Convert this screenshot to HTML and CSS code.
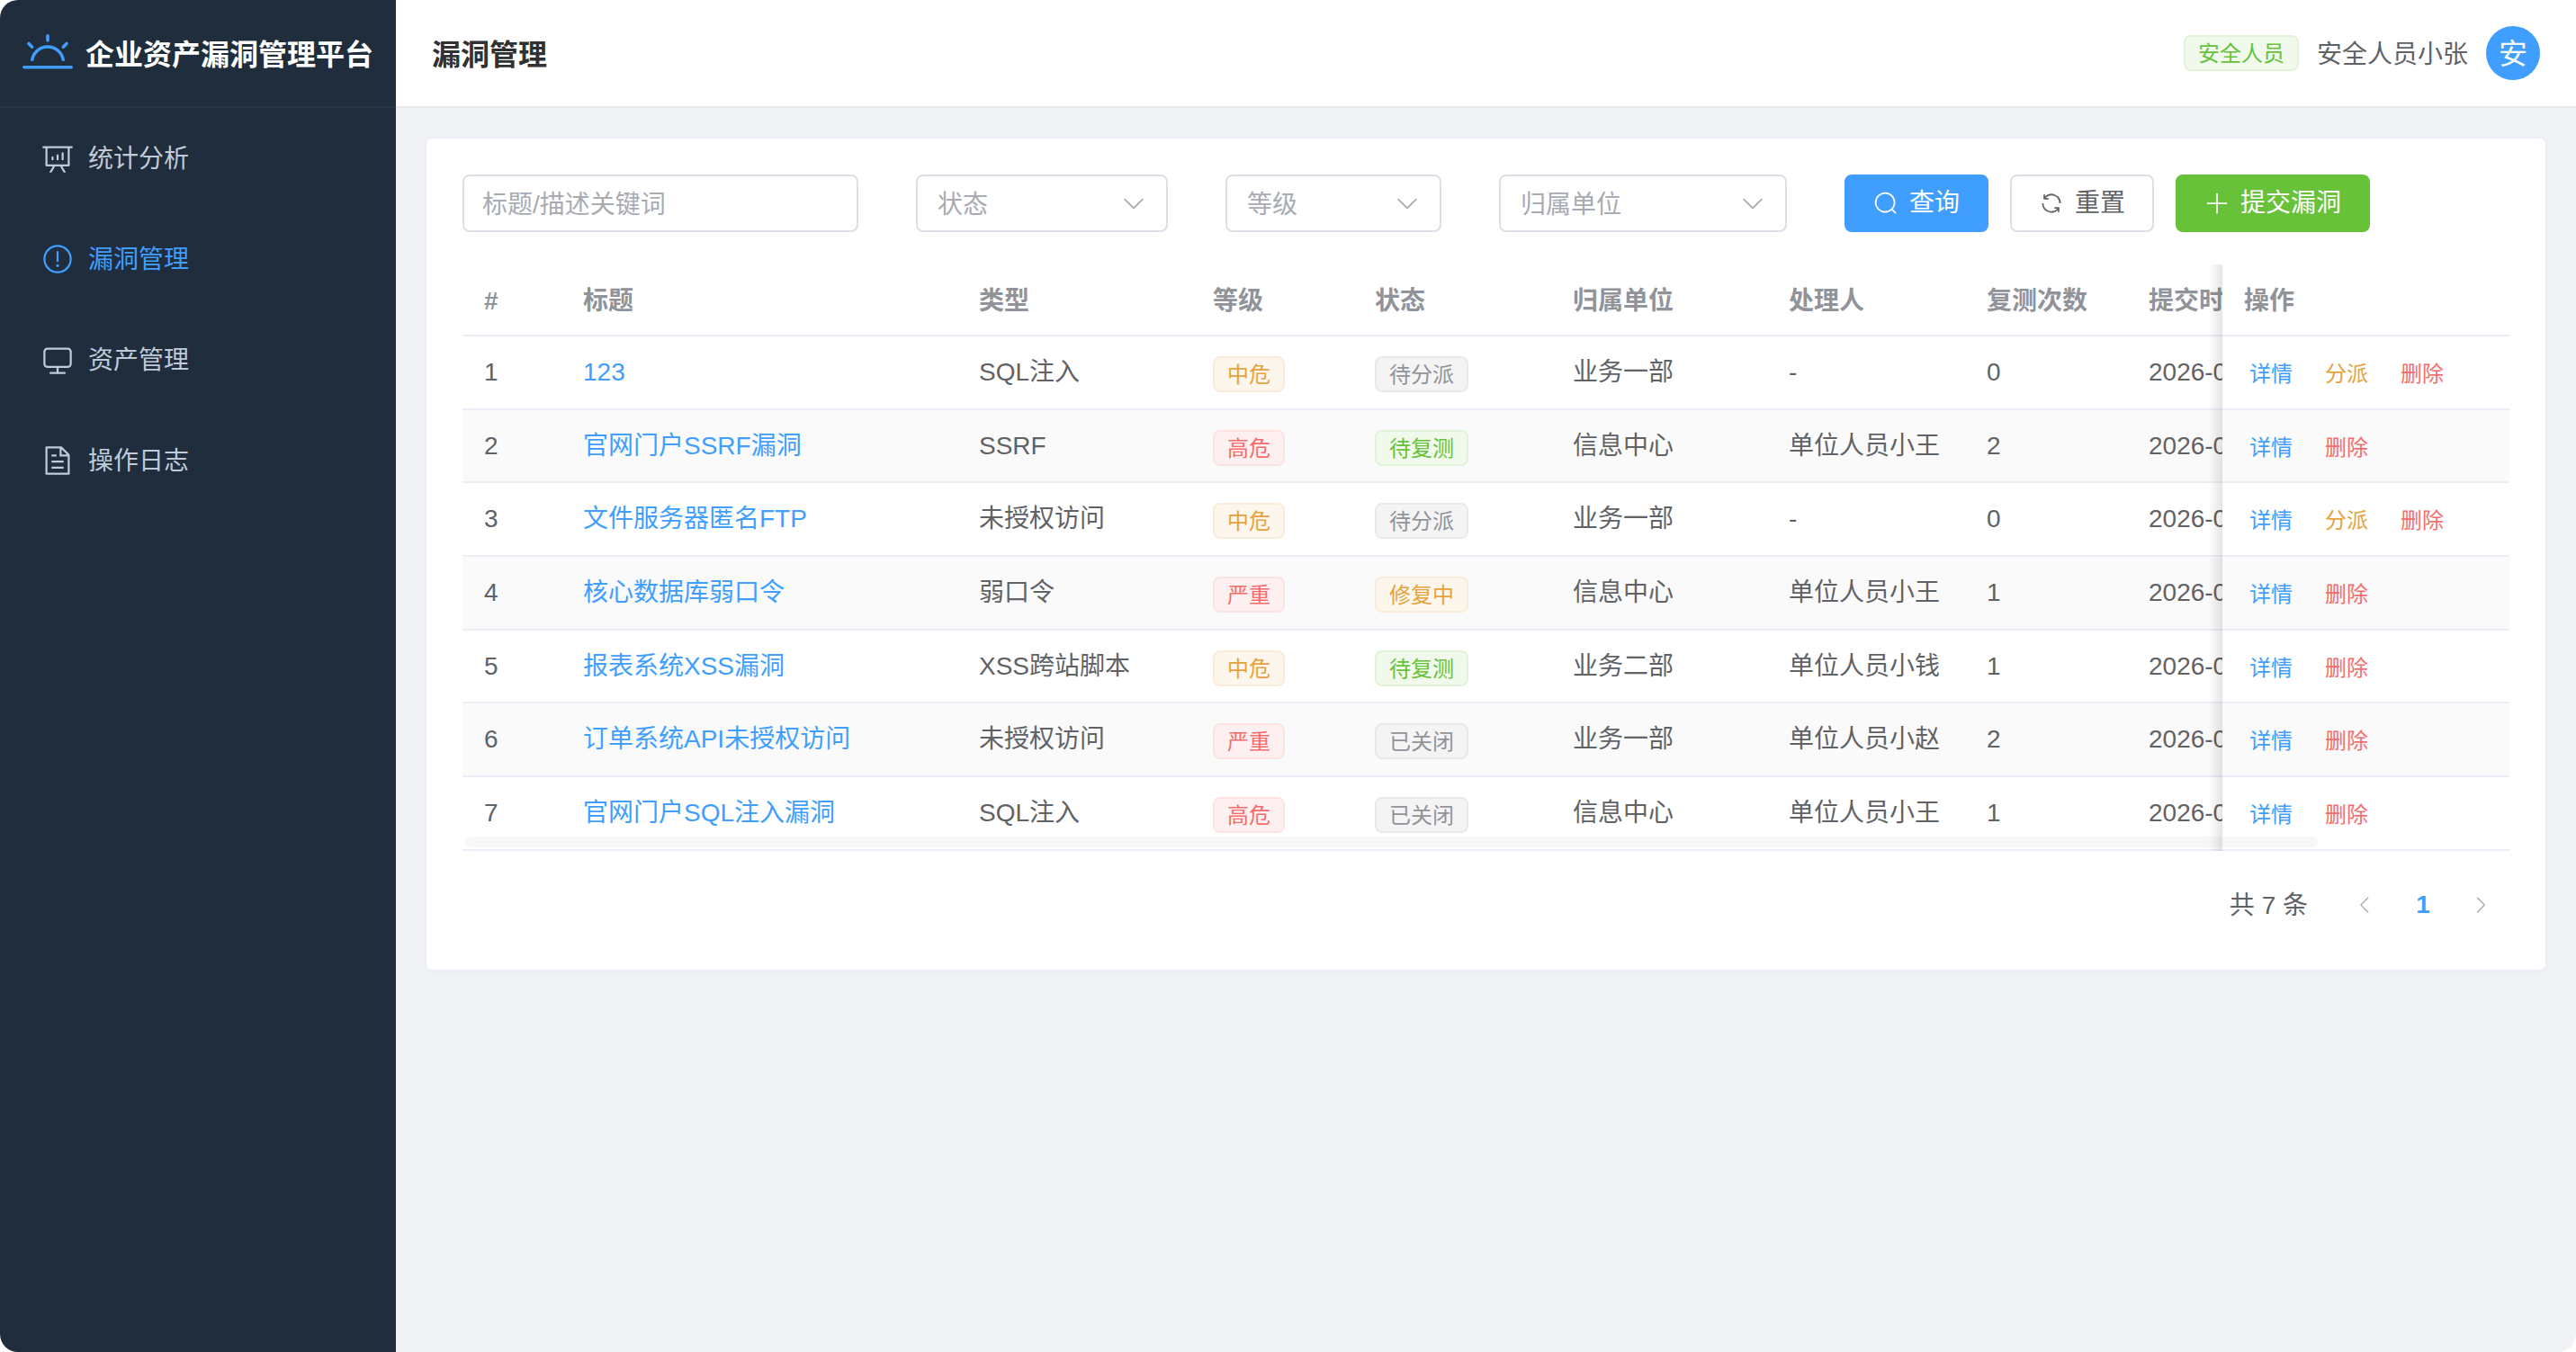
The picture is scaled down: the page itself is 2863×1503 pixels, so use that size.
FILE: index.html
```html
<!DOCTYPE html>
<html lang="zh-CN">
<head>
<meta charset="utf-8">
<title>企业资产漏洞管理平台</title>
<link rel="stylesheet" href="styles.css">
</head>
<body>
<div class="app">
  <aside class="sidebar">
    <div class="brand">
      <svg class="brand-icon" viewBox="0 0 1024 1024"><path d="M32 768h960a32 32 0 1 1 0 64H32a32 32 0 1 1 0-64zm129.408-96a352 352 0 0 1 701.184 0h-64.32a288 288 0 0 0-572.544 0h-64.32zM512 128a32 32 0 0 1 32 32v96a32 32 0 0 1-64 0v-96a32 32 0 0 1 32-32zm407.296 168.704a32 32 0 0 1 0 45.248l-67.84 67.84a32 32 0 1 1-45.248-45.248l67.84-67.84a32 32 0 0 1 45.248 0zm-814.592 0a32 32 0 0 1 45.248 0l67.84 67.84a32 32 0 1 1-45.248 45.248l-67.84-67.84a32 32 0 0 1 0-45.248z"/></svg>
      <span class="brand-name">企业资产漏洞管理平台</span>
    </div>
    <nav class="menu">
      <a class="menu-item"><svg class="menu-icon" viewBox="0 0 1024 1024"><path d="m665.216 768 110.848 192h-73.856L591.36 768H433.024L322.176 960H248.32l110.848-192H160a32 32 0 0 1-32-32V192H64a32 32 0 0 1 0-64h896a32 32 0 1 1 0 64h-64v544a32 32 0 0 1-32 32H665.216zM832 192H192v512h640V192zM352 448a32 32 0 0 1 32 32v64a32 32 0 0 1-64 0v-64a32 32 0 0 1 32-32zm160-64a32 32 0 0 1 32 32v128a32 32 0 0 1-64 0V416a32 32 0 0 1 32-32zm160-64a32 32 0 0 1 32 32v192a32 32 0 1 1-64 0V352a32 32 0 0 1 32-32z"/></svg><span class="menu-label">统计分析</span></a>
      <a class="menu-item is-active"><svg class="menu-icon" viewBox="0 0 1024 1024"><path d="M512 64a448 448 0 1 1 0 896 448 448 0 0 1 0-896zm0 832a384 384 0 0 0 0-768 384 384 0 0 0 0 768zm48-176a48 48 0 1 1-96 0 48 48 0 0 1 96 0zm-48-464a32 32 0 0 1 32 32v288a32 32 0 0 1-64 0V288a32 32 0 0 1 32-32z"/></svg><span class="menu-label">漏洞管理</span></a>
      <a class="menu-item"><svg class="menu-icon" viewBox="0 0 1024 1024"><path d="M544 768v128h192a32 32 0 1 1 0 64H288a32 32 0 1 1 0-64h192V768H192A128 128 0 0 1 64 640V256a128 128 0 0 1 128-128h640a128 128 0 0 1 128 128v384a128 128 0 0 1-128 128H544zM192 192a64 64 0 0 0-64 64v384a64 64 0 0 0 64 64h640a64 64 0 0 0 64-64V256a64 64 0 0 0-64-64H192z"/></svg><span class="menu-label">资产管理</span></a>
      <a class="menu-item"><svg class="menu-icon" viewBox="0 0 1024 1024"><path d="M832 384H576V128H192v768h640V384zm-26.496-64L640 154.496V320h165.504zM160 64h480l256 256v608a32 32 0 0 1-32 32H160a32 32 0 0 1-32-32V96a32 32 0 0 1 32-32zm160 448h384v64H320v-64zm0-192h160v64H320v-64zm0 384h384v64H320v-64z"/></svg><span class="menu-label">操作日志</span></a>
    </nav>
  </aside>
  <div class="main">
    <header class="topbar">
      <h1 class="page-title">漏洞管理</h1>
      <div class="user">
        <span class="tag tag-success">安全人员</span>
        <span class="user-name">安全人员小张</span>
        <span class="avatar">安</span>
      </div>
    </header>
    <main class="content">
      <section class="card">
        <div class="filters">
          <div class="field field-keyword"><span class="placeholder">标题/描述关键词</span></div>
          <div class="field field-select field-status"><span class="placeholder">状态</span><svg class="caret" viewBox="0 0 1024 1024"><path d="M831.872 340.864 512 652.672 192.128 340.864a30.592 30.592 0 0 0-42.752 0 29.12 29.12 0 0 0 0 41.6L489.664 714.24a32 32 0 0 0 44.672 0l340.288-331.776a29.12 29.12 0 0 0 0-41.728 30.592 30.592 0 0 0-42.752 0z"/></svg></div>
          <div class="field field-select field-level"><span class="placeholder">等级</span><svg class="caret" viewBox="0 0 1024 1024"><path d="M831.872 340.864 512 652.672 192.128 340.864a30.592 30.592 0 0 0-42.752 0 29.12 29.12 0 0 0 0 41.6L489.664 714.24a32 32 0 0 0 44.672 0l340.288-331.776a29.12 29.12 0 0 0 0-41.728 30.592 30.592 0 0 0-42.752 0z"/></svg></div>
          <div class="field field-select field-owner"><span class="placeholder">归属单位</span><svg class="caret" viewBox="0 0 1024 1024"><path d="M831.872 340.864 512 652.672 192.128 340.864a30.592 30.592 0 0 0-42.752 0 29.12 29.12 0 0 0 0 41.6L489.664 714.24a32 32 0 0 0 44.672 0l340.288-331.776a29.12 29.12 0 0 0 0-41.728 30.592 30.592 0 0 0-42.752 0z"/></svg></div>
          <div class="actions">
            <button class="btn btn-primary"><svg class="btn-icon" viewBox="0 0 1024 1024"><path d="m795.904 750.72 124.992 124.928a32 32 0 0 1-45.248 45.248L750.656 795.904a416 416 0 1 1 45.248-45.248zM480 832a352 352 0 1 0 0-704 352 352 0 0 0 0 704z"/></svg>查询</button>
            <button class="btn btn-default"><svg class="btn-icon" viewBox="0 0 1024 1024"><path d="M771.776 794.88A384 384 0 0 1 128 512h64a320 320 0 0 0 555.712 216.448H654.72a32 32 0 1 1 0-64h149.056a32 32 0 0 1 32 32v148.928a32 32 0 1 1-64 0v-50.56zM276.288 295.616h92.992a32 32 0 0 1 0 64H220.16a32 32 0 0 1-32-32V178.56a32 32 0 0 1 64 0v50.56A384 384 0 0 1 896.128 512h-64a320 320 0 0 0-555.776-216.384z"/></svg>重置</button>
            <button class="btn btn-success"><svg class="btn-icon" viewBox="0 0 1024 1024"><path d="M480 480V128a32 32 0 0 1 64 0v352h352a32 32 0 0 1 0 64H544v352a32 32 0 1 1-64 0V544H128a32 32 0 0 1 0-64h352z"/></svg>提交漏洞</button>
          </div>
        </div>
        <div class="table-wrap">
          <table class="table">
            <colgroup>
              <col class="c-id"><col class="c-title"><col class="c-type"><col class="c-level"><col class="c-status"><col class="c-owner"><col class="c-handler"><col class="c-retest"><col class="c-time"><col class="c-ops">
            </colgroup>
            <thead>
              <tr><th>#</th><th>标题</th><th>类型</th><th>等级</th><th>状态</th><th>归属单位</th><th>处理人</th><th>复测次数</th><th class="cut">提交时间</th><th>操作</th></tr>
            </thead>
            <tbody>
              <tr><td>1</td><td><a class="link">123</a></td><td>SQL注入</td><td><span class="tag tag-warning">中危</span></td><td><span class="tag tag-info">待分派</span></td><td>业务一部</td><td>-</td><td>0</td><td class="cut">2026-0</td><td class="ops"><a class="op op-blue">详情</a><a class="op op-orange">分派</a><a class="op op-red">删除</a></td></tr>
              <tr><td>2</td><td><a class="link">官网门户SSRF漏洞</a></td><td>SSRF</td><td><span class="tag tag-danger">高危</span></td><td><span class="tag tag-success">待复测</span></td><td>信息中心</td><td>单位人员小王</td><td>2</td><td class="cut">2026-0</td><td class="ops"><a class="op op-blue">详情</a><a class="op op-red">删除</a></td></tr>
              <tr><td>3</td><td><a class="link">文件服务器匿名FTP</a></td><td>未授权访问</td><td><span class="tag tag-warning">中危</span></td><td><span class="tag tag-info">待分派</span></td><td>业务一部</td><td>-</td><td>0</td><td class="cut">2026-0</td><td class="ops"><a class="op op-blue">详情</a><a class="op op-orange">分派</a><a class="op op-red">删除</a></td></tr>
              <tr><td>4</td><td><a class="link">核心数据库弱口令</a></td><td>弱口令</td><td><span class="tag tag-danger">严重</span></td><td><span class="tag tag-warning">修复中</span></td><td>信息中心</td><td>单位人员小王</td><td>1</td><td class="cut">2026-0</td><td class="ops"><a class="op op-blue">详情</a><a class="op op-red">删除</a></td></tr>
              <tr><td>5</td><td><a class="link">报表系统XSS漏洞</a></td><td>XSS跨站脚本</td><td><span class="tag tag-warning">中危</span></td><td><span class="tag tag-success">待复测</span></td><td>业务二部</td><td>单位人员小钱</td><td>1</td><td class="cut">2026-0</td><td class="ops"><a class="op op-blue">详情</a><a class="op op-red">删除</a></td></tr>
              <tr><td>6</td><td><a class="link">订单系统API未授权访问</a></td><td>未授权访问</td><td><span class="tag tag-danger">严重</span></td><td><span class="tag tag-info">已关闭</span></td><td>业务一部</td><td>单位人员小赵</td><td>2</td><td class="cut">2026-0</td><td class="ops"><a class="op op-blue">详情</a><a class="op op-red">删除</a></td></tr>
              <tr><td>7</td><td><a class="link">官网门户SQL注入漏洞</a></td><td>SQL注入</td><td><span class="tag tag-danger">高危</span></td><td><span class="tag tag-info">已关闭</span></td><td>信息中心</td><td>单位人员小王</td><td>1</td><td class="cut">2026-0</td><td class="ops"><a class="op op-blue">详情</a><a class="op op-red">删除</a></td></tr>
            </tbody>
          </table>
          <div class="fixed-shadow"></div>
          <div class="scrollbar"></div>
        </div>
        <div class="pagination">
          <span class="total">共 7 条</span>
          <span class="page-btn"><svg class="page-arrow" viewBox="0 0 1024 1024"><path d="M609.408 149.376 277.76 489.6a32 32 0 0 0 0 44.672l331.648 340.352a29.12 29.12 0 0 0 41.728 0 30.592 30.592 0 0 0 0-42.752L339.264 511.936l311.872-319.872a30.592 30.592 0 0 0 0-42.688 29.12 29.12 0 0 0-41.728 0z"/></svg></span>
          <span class="page-btn page-current">1</span>
          <span class="page-btn"><svg class="page-arrow" viewBox="0 0 1024 1024"><path d="M340.864 149.312a30.592 30.592 0 0 0 0 42.752L652.736 512 340.864 831.872a30.592 30.592 0 0 0 0 42.752 29.12 29.12 0 0 0 41.728 0L714.24 534.336a32 32 0 0 0 0-44.672L382.592 149.376a29.12 29.12 0 0 0-41.728 0z"/></svg></span>
        </div>
      </section>
    </main>
  </div>
</div>
</body>
</html>
```
FILE: styles.css
```css
* { box-sizing: border-box; }
html, body { height: 100%; margin: 0; }
body {
  background: #fff;
  color: #606266;
  font-family: "Liberation Sans", "Noto Sans CJK SC", sans-serif;
  font-size: 28px;
  line-height: 40px;
  overflow: hidden;
}
svg { fill: currentColor; display: block; flex: none; }

.app {
  display: flex;
  height: 100vh;
  border-radius: 20px;
  overflow: hidden;
}

/* sidebar */
.sidebar {
  width: 440px;
  flex: none;
  background: #1f2d3d;
}
.brand {
  display: flex;
  align-items: center;
  gap: 14px;
  height: 120px;
  padding-left: 25px;
  border-bottom: 2px solid rgba(255, 255, 255, .05);
}
.brand-icon { width: 56px; height: 56px; color: #409eff; }
.brand-name { padding-top: 4px; color: #fff; font-size: 32px; font-weight: 700; }
.menu { display: flex; flex-direction: column; }
.menu-item {
  display: flex;
  align-items: center;
  gap: 16px;
  height: 112px;
  padding-left: 46px;
  color: #bfcbd9;
}
.menu-item.is-active { color: #409eff; }
.menu-icon { width: 36px; height: 36px; }
.menu-label { padding-top: 2px; }

/* main column */
.main {
  flex: 1;
  min-width: 0;
  display: flex;
  flex-direction: column;
  background: #f0f2f5;
}
.topbar {
  display: flex;
  align-items: center;
  justify-content: space-between;
  height: 120px;
  flex: none;
  padding: 0 40px;
  background: #fff;
  border-bottom: 2px solid #e6e8ec;
}
.page-title { margin: 0; padding-top: 4px; font-size: 32px; font-weight: 700; color: #303133; }
.user { display: flex; align-items: center; gap: 20px; }
.user-name { padding-top: 4px; color: #606266; }
.avatar {
  display: flex;
  align-items: center;
  justify-content: center;
  width: 60px;
  height: 60px;
  padding-top: 2px;
  border-radius: 50%;
  background: #409eff;
  color: #fff;
  font-size: 32px;
}

.content { flex: 1; padding: 32px; }
.card {
  background: #fff;
  border: 2px solid #ebeef5;
  border-radius: 8px;
  padding: 40px;
  box-shadow: 0 2px 6px rgba(0, 0, 0, .02);
}

/* filters */
.filters { display: flex; gap: 64px; margin-bottom: 36px; }
.field {
  display: flex;
  align-items: center;
  justify-content: space-between;
  height: 64px;
  padding: 0 20px;
  border: 2px solid #dcdfe6;
  border-radius: 8px;
  background: #fff;
}
.field-select { padding: 0 21px 0 22px; }
.field-keyword { width: 440px; }
.field-status { width: 280px; }
.field-level { width: 240px; }
.field-owner { width: 320px; }
.placeholder { padding-top: 3px; color: #a8abb2; }
.caret { width: 30px; height: 30px; color: #a8abb2; }
.actions { display: flex; gap: 24px; }
.btn {
  display: flex;
  align-items: center;
  gap: 12px;
  height: 64px;
  padding: 0 30px;
  border: 2px solid transparent;
  border-radius: 8px;
  font: inherit;
  cursor: pointer;
}
.btn-icon { width: 28px; height: 28px; }
.btn-primary { background: #409eff; border-color: #409eff; color: #fff; }
.btn-default { background: #fff; border-color: #dcdfe6; color: #606266; }
.btn-success { background: #67c23a; border-color: #67c23a; color: #fff; }

/* table */
.table-wrap { position: relative; overflow: hidden; }
.table {
  width: 100%;
  table-layout: fixed;
  border-collapse: separate;
  border-spacing: 0;
}
.c-id { width: 110px; }
.c-title { width: 440px; }
.c-type { width: 260px; }
.c-level { width: 180px; }
.c-status { width: 220px; }
.c-owner { width: 240px; }
.c-handler { width: 220px; }
.c-retest { width: 180px; }
.c-time { width: 106px; }
.c-ops { width: 319px; }
.table th, .table td {
  padding: 0 24px;
  border-bottom: 2px solid #ebeef5;
  text-align: left;
  white-space: nowrap;
  overflow: hidden;
  background: #fff;
}
.table .cut { padding-right: 0; }
.table th { height: 80px; padding-top: 3px; color: #909399; font-weight: 700; }
.table td { height: 81.7px; color: #606266; }
.table tbody tr:nth-child(even) td { background: #fafafa; }
.table td.ops { padding-left: 30px; padding-top: 4px; font-size: 24px; }
.table .tag { margin-top: 4px; }
.link { color: #409eff; }
.op { margin-right: 36px; }
.op:last-child { margin-right: 0; }
.op-blue { color: #409eff; }
.op-orange { color: #e6a23c; }
.op-red { color: #f56c6c; }
.fixed-shadow {
  position: absolute;
  top: 0;
  bottom: 0;
  right: 319px;
  width: 16px;
  z-index: 2;
  background: linear-gradient(to left, rgba(0, 0, 0, .1), rgba(0, 0, 0, 0));
}
.scrollbar {
  position: absolute;
  left: 4px;
  bottom: 4px;
  width: 2058px;
  height: 12px;
  border-radius: 6px;
  z-index: 3;
  background: rgba(144, 147, 153, .08);
}

/* tags */
.tag {
  display: inline-flex;
  align-items: center;
  height: 40px;
  padding: 2px 14px 0;
  border: 2px solid;
  border-radius: 8px;
  font-size: 24px;
  vertical-align: middle;
}
.tag-warning { background: #fdf6ec; border-color: #faecd8; color: #e6a23c; }
.tag-danger { background: #fef0f0; border-color: #fde2e2; color: #f56c6c; }
.tag-success { background: #f0f9eb; border-color: #e1f3d8; color: #67c23a; }
.tag-info { background: #f4f4f5; border-color: #e9e9eb; color: #909399; }

/* pagination */
.pagination {
  display: flex;
  align-items: center;
  justify-content: flex-end;
  margin-top: 28px;
  height: 64px;
}
.total { margin-right: 32px; padding-top: 3px; color: #606266; }
.page-btn {
  display: flex;
  align-items: center;
  justify-content: center;
  width: 64px;
  height: 64px;
  color: #a8abb2;
}
.page-current { color: #409eff; font-weight: 700; }
.page-arrow { width: 24px; height: 24px; }
```
